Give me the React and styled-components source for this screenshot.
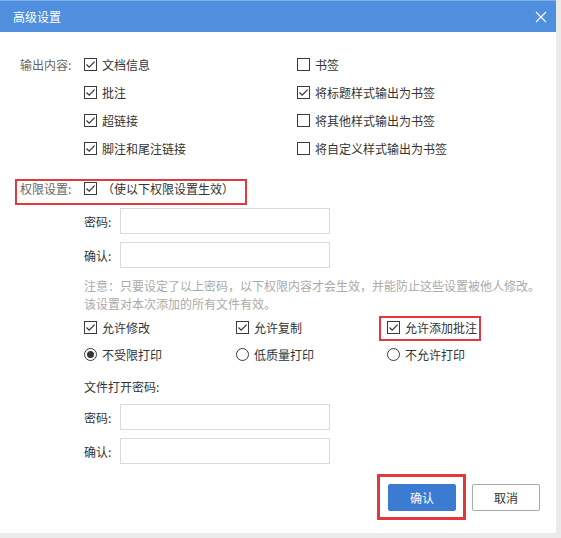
import React from 'react';
import styled, { createGlobalStyle } from 'styled-components';

const GlobalStyle = createGlobalStyle`
  html, body {
    margin: 0;
    padding: 0;
    background: #ebebeb;
  }
  body {
    font-family: "Noto Sans CJK SC", "Noto Sans", sans-serif;
    font-size: 12px;
    color: #333;
  }
`;

const Dialog = styled.div`
  width: 556px;
  height: 533px;
  background: #fff;
  display: flex;
  flex-direction: column;
  box-sizing: border-box;
`;

const Header = styled.div`
  height: 32px;
  flex-shrink: 0;
  background: #4f8fdd;
  border-top: 1px solid #7fb0ea;
  box-sizing: border-box;
  display: flex;
  align-items: center;
  justify-content: space-between;
  padding: 0 9px 0 13px;
  color: #fff;
  font-size: 12px;
`;

const Close = styled.span`
  display: flex;
  width: 12px;
  height: 12px;
`;

const Body = styled.div`
  padding: 18px 16px 0 20px;
  display: flex;
  flex-direction: column;
`;

const OutputGrid = styled.div`
  display: grid;
  grid-template-columns: 64px 213px 1fr;
  grid-auto-rows: 28px;
  align-items: center;
`;

const Label = styled.span`
  color: #666;
  white-space: nowrap;
`;

const Option = styled.label`
  display: flex;
  align-items: center;
  gap: 5px;
  white-space: nowrap;
  color: #333;
`;

const Box = styled.span`
  width: 13px;
  height: 13px;
  box-sizing: border-box;
  border: 1px solid #3a3a3a;
  display: flex;
  align-items: center;
  justify-content: center;
  flex-shrink: 0;
`;

const Round = styled.span`
  width: 13px;
  height: 13px;
  box-sizing: border-box;
  border: 1px solid #3a3a3a;
  border-radius: 50%;
  display: flex;
  align-items: center;
  justify-content: center;
  flex-shrink: 0;

  &::after {
    content: "";
    width: 7px;
    height: 7px;
    border-radius: 50%;
    background: ${(p) => (p.$on ? '#333' : 'transparent')};
  }
`;

const PermRow = styled.div`
  position: relative;
  margin-top: 12px;
  height: 28px;
  display: grid;
  grid-template-columns: 64px 1fr;
  align-items: center;
`;

const Mark = styled.div`
  position: absolute;
  border: ${(p) => p.$w || 2}px solid #e23a3c;
  pointer-events: none;
  box-sizing: border-box;
`;

const Indent = styled.div`
  margin-left: 64px;
  margin-top: ${(p) => p.$mt || 0}px;
`;

const FieldRow = styled(Indent)`
  display: flex;
  align-items: center;
  height: 26px;
`;

const FieldLabel = styled.span`
  width: 36px;
  color: #333;
`;

const Input = styled.div`
  width: 210px;
  height: 26px;
  box-sizing: border-box;
  border: 1px solid #dadada;
  background: #fff;
`;

const Note = styled(Indent)`
  color: #aaa;
  line-height: 18px;
  white-space: nowrap;
`;

const OptRow = styled(Indent)`
  position: relative;
  display: grid;
  grid-template-columns: 152px 151px 1fr;
  align-items: center;
  height: 24px;
`;

const SubTitle = styled(Indent)`
  height: 20px;
  line-height: 20px;
  color: #333;
`;

const Footer = styled.div`
  position: relative;
  margin-top: 20px;
  display: flex;
  justify-content: flex-end;
  gap: 16px;
  padding-right: 16px;
`;

const Button = styled.button`
  width: 68px;
  height: 27px;
  font-family: inherit;
  font-size: 12px;
  border-radius: 2px;
  box-sizing: border-box;
  padding: 0;
  cursor: pointer;
  border: 1px solid ${(p) => (p.$primary ? '#3c7bd2' : '#a9a9a9')};
  background: ${(p) => (p.$primary ? '#3c7bd2' : '#fff')};
  color: ${(p) => (p.$primary ? '#fff' : '#333')};
`;

const Check = ({ on }) => (
  <Box>
    {on && (
      <svg width="11" height="11" viewBox="0 0 11 11">
        <polyline points="1.5,5.5 4.2,8.2 9.6,2.6" fill="none" stroke="#333" strokeWidth="1.2" />
      </svg>
    )}
  </Box>
);

const CheckOpt = ({ on, children }) => (
  <Option>
    <Check on={on} />
    <span>{children}</span>
  </Option>
);

const RadioOpt = ({ on, children }) => (
  <Option>
    <Round $on={on} />
    <span>{children}</span>
  </Option>
);

const Field = ({ label, mt }) => (
  <FieldRow $mt={mt}>
    <FieldLabel>{label}</FieldLabel>
    <Input />
  </FieldRow>
);

const outputs = [
  ['文档信息', true, '书签', false],
  ['批注', true, '将标题样式输出为书签', true],
  ['超链接', true, '将其他样式输出为书签', false],
  ['脚注和尾注链接', true, '将自定义样式输出为书签', false],
];

export default function App() {
  return (
    <>
      <GlobalStyle />
      <Dialog>
        <Header>
          <span>高级设置</span>
          <Close>
            <svg width="12" height="12" viewBox="0 0 12 12">
              <path d="M1 1L11 11M11 1L1 11" stroke="#fff" strokeWidth="1.1" />
            </svg>
          </Close>
        </Header>
        <Body>
          <OutputGrid>
            {outputs.map(([a, aOn, b, bOn], i) => (
              <React.Fragment key={a}>
                <Label>{i === 0 ? '输出内容:' : ''}</Label>
                <CheckOpt on={aOn}>{a}</CheckOpt>
                <CheckOpt on={bOn}>{b}</CheckOpt>
              </React.Fragment>
            ))}
          </OutputGrid>

          <PermRow>
            <Label>权限设置:</Label>
            <CheckOpt on>（使以下权限设置生效）</CheckOpt>
            <Mark style={{ left: -5, top: 5, width: 232, height: 26 }} />
          </PermRow>

          <Field label="密码:" mt={6} />
          <Field label="确认:" mt={8} />

          <Note $mt={9}>
            注意：只要设定了以上密码，以下权限内容才会生效，并能防止这些设置被他人修改。
            <br />
            该设置对本次添加的所有文件有效。
          </Note>

          <OptRow $mt={2}>
            <CheckOpt on>允许修改</CheckOpt>
            <CheckOpt on>允许复制</CheckOpt>
            <CheckOpt on>允许添加批注</CheckOpt>
            <Mark style={{ left: 295, top: 1, width: 102, height: 25 }} />
          </OptRow>
          <OptRow $mt={3}>
            <RadioOpt on>不受限打印</RadioOpt>
            <RadioOpt>低质量打印</RadioOpt>
            <RadioOpt>不允许打印</RadioOpt>
          </OptRow>

          <SubTitle $mt={11}>文件打开密码:</SubTitle>
          <Field label="密码:" mt={7} />
          <Field label="确认:" mt={8} />
        </Body>
        <Footer>
          <Button $primary>确认</Button>
          <Button>取消</Button>
          <Mark $w={3} style={{ right: 90, top: -10, width: 89, height: 46 }} />
        </Footer>
      </Dialog>
    </>
  );
}
